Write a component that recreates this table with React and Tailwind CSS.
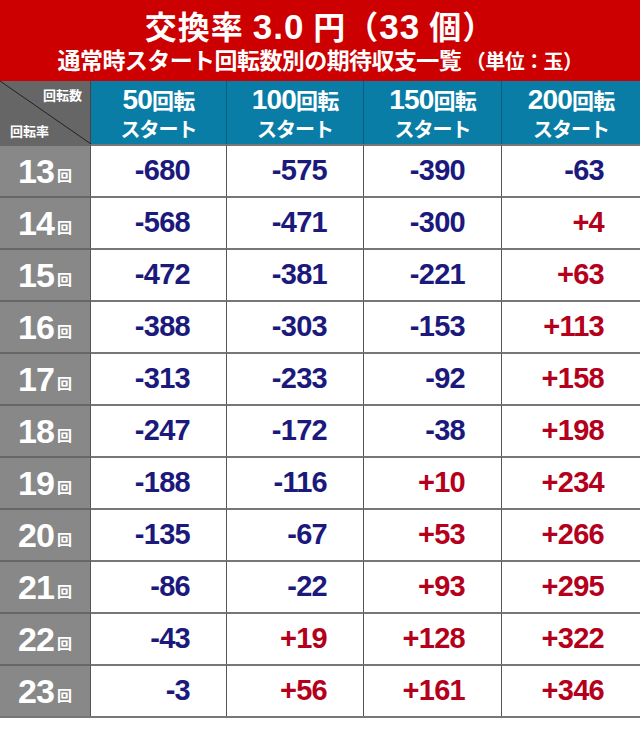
import React from 'react';

const cols = ['50', '100', '150', '200'];

const rows = [
  [13, -680, -575, -390, -63],
  [14, -568, -471, -300, 4],
  [15, -472, -381, -221, 63],
  [16, -388, -303, -153, 113],
  [17, -313, -233, -92, 158],
  [18, -247, -172, -38, 198],
  [19, -188, -116, 10, 234],
  [20, -135, -67, 53, 266],
  [21, -86, -22, 93, 295],
  [22, -43, 19, 128, 322],
  [23, -3, 56, 161, 346],
];

const jp = "font-['Noto_Sans_CJK_JP',sans-serif]";
const num = "font-['Liberation_Sans','Noto_Sans_CJK_JP',sans-serif]";

const fmt = (v) => (v > 0 ? `+${v}` : `${v}`);

export default function App() {
  return (
    <div className="w-[640px] h-[731px] bg-white">
      {/* title */}
      <div className="h-[81px] bg-[#cc0000] flex flex-col items-center justify-center text-white font-bold pt-[2px]">
        <div className={`${jp} text-[32px] leading-[34px] tracking-[1px] flex items-baseline`}>
          <span>交換率</span>
          <span className={`${num} text-[35px] leading-none mx-[9px]`}>3.0</span>
          <span>円（</span>
          <span className={`${num} text-[35px] leading-none mr-[9px]`}>33</span>
          <span>個）</span>
        </div>
        <div className={`${jp} text-[23px] leading-[30px] tracking-tight`}>
          通常時スタート回転数別の期待収支一覧 <span className="text-[20px]">（単位：玉）</span>
        </div>
      </div>

      <div className="grid grid-cols-[91px_136px_137px_138px_138px] border-b-2 border-[#777]">
        {/* corner */}
        <div className="relative h-[63px] bg-[#666] border-r border-[#444]">
          <svg className="absolute inset-0" width="91" height="63">
            <line x1="0" y1="0" x2="91" y2="63" stroke="#222" strokeWidth="1" />
          </svg>
          <span className={`${jp} absolute right-[8px] top-[4px] text-white font-bold text-[13px]`}>回転数</span>
          <span className={`${jp} absolute left-[10px] bottom-[4px] text-white font-bold text-[13px]`}>回転率</span>
        </div>
        {cols.map((c, i) => (
          <div
            key={c}
            className={`h-[63px] bg-[#0a7da6] flex flex-col items-center justify-center text-white font-bold ${
              i < 3 ? 'border-r border-[#075e7e]' : ''
            }`}
          >
            <div className={`${jp} leading-[28px] tracking-tighter`}>
              <span className={`${num} text-[28px]`}>{c}</span>
              <span className="text-[22px]">回転</span>
            </div>
            <div className={`${jp} text-[20px] leading-[25px] tracking-tighter`}>スタート</div>
          </div>
        ))}

        {rows.map(([label, ...vals]) => (
          <React.Fragment key={label}>
            <div className="h-[52px] bg-[#888] border-t-2 border-[#666] border-r border-r-[#555] flex items-center justify-center text-white font-bold">
              <span className={`${num} text-[34px] tracking-tight`}>{label}</span>
              <span className={`${jp} text-[15px] ml-[3px] mt-[9px]`}>回</span>
            </div>
            {vals.map((v, i) => (
              <div
                key={i}
                className={`h-[52px] border-t-2 border-[#777] flex items-center justify-end pr-[36px] font-bold ${num} text-[29px] tracking-tight ${
                  v > 0 ? 'text-[#b5001c]' : 'text-[#1b1a7c]'
                } ${i < 3 ? 'border-r border-r-[#555]' : ''}`}
              >
                {fmt(v)}
              </div>
            ))}
          </React.Fragment>
        ))}
      </div>
    </div>
  );
}
